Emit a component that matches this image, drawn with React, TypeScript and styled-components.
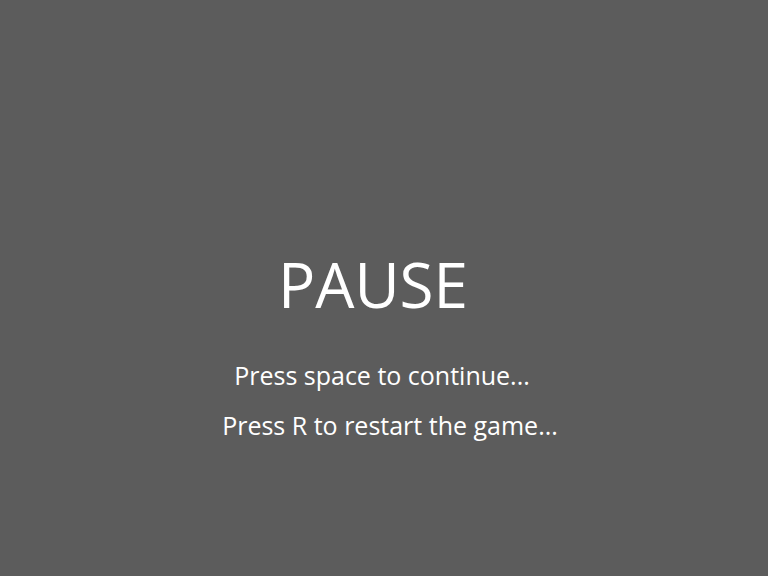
import React from "react";
import styled, { createGlobalStyle } from "styled-components";

const Global = createGlobalStyle`
  html, body { margin: 0; padding: 0; background: #5c5c5c; }
  body { font-family: "Open Sans", "Noto Sans", sans-serif; }
`;

const Screen = styled.div`
  width: 768px;
  height: 576px;
  background: #5c5c5c;
  display: flex;
  flex-direction: column;
  align-items: center;
  padding-top: 240px;
  box-sizing: border-box;
  color: #ffffff;
`;

const Title = styled.h1`
  margin: 0;
  font-weight: 400;
  font-size: 62px;
  line-height: 88px;
  letter-spacing: 0;
  transform: translateX(-11px);
`;

const Hint = styled.p<{ $shift: number }>`
  margin: 0;
  font-size: 25px;
  line-height: 50px;
  transform: translateX(${(p) => p.$shift}px);
`;

const Hints = styled.div`
  display: flex;
  flex-direction: column;
  align-items: center;
  margin-top: 22px;
`;

export default function App() {
  return (
    <>
      <Global />
      <Screen>
        <Title>PAUSE</Title>
        <Hints>
          <Hint $shift={-2}>Press space to continue...</Hint>
          <Hint $shift={6}>Press R to restart the game...</Hint>
        </Hints>
      </Screen>
    </>
  );
}
